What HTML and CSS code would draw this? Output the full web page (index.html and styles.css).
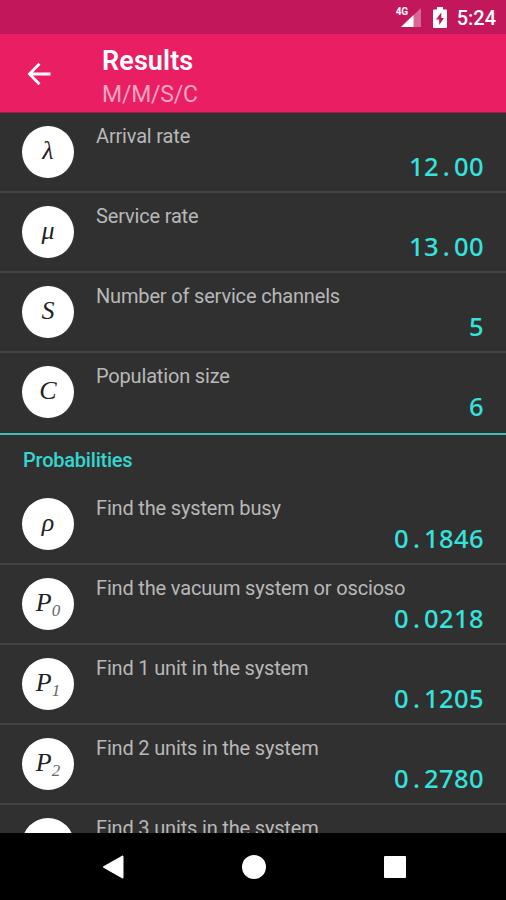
FILE: index.html
```html
<!DOCTYPE html>
<html lang="en">
<head>
    <meta charset="UTF-8">
    <meta name="viewport" content="width=device-width, initial-scale=1.0">
    <title>Results</title>
    <link rel="stylesheet" href="styles.css">
</head>
<body>
    <!-- Status bar -->
    <div class="status-bar">
        <div class="signal">
            <span class="network">4G</span>
            <svg width="20" height="19" viewBox="0 0 20 19">
                <path d="M20 0V19H0z" fill="#fff" fill-opacity="0.35"/>
                <path d="M12.5 7.1V19H0z" fill="#fff"/>
            </svg>
        </div>
        <svg class="battery" width="14" height="21" viewBox="0 0 14 21">
            <path d="M4 0h6v2.5h3q1 0 1 1V20q0 1-1 1H1q-1 0-1-1V3.500q0-1 1-1h3z" fill="#fff"/>
            <path d="M8.300 5.500L3 12.500h3.200v5.500L11 11H8.300z" fill="#c2185b"/>
        </svg>
        <span class="time">5:24</span>
    </div>

    <!-- Toolbar -->
    <header class="toolbar">
        <svg class="back" width="24" height="24" viewBox="0 0 24 24">
            <path d="M23.500 12H3M12.500 1.800L2.500 12l10 10.200" fill="none" stroke="#fff" stroke-width="2.800"/>
        </svg>
        <div>
            <h1>Results</h1>
            <p class="subtitle">M/M/S/C</p>
        </div>
    </header>

    <!-- Results list -->
    <main class="content">
        <ul class="list">
            <li class="row">
                <span class="symbol">λ</span>
                <div class="info">
                    <p class="label">Arrival rate</p>
                    <p class="value">12<span class="dot">.</span>00</p>
                </div>
            </li>
            <li class="row">
                <span class="symbol">μ</span>
                <div class="info">
                    <p class="label">Service rate</p>
                    <p class="value">13<span class="dot">.</span>00</p>
                </div>
            </li>
            <li class="row">
                <span class="symbol">S</span>
                <div class="info">
                    <p class="label">Number of service channels</p>
                    <p class="value">5</p>
                </div>
            </li>
            <li class="row">
                <span class="symbol">C</span>
                <div class="info">
                    <p class="label">Population size</p>
                    <p class="value">6</p>
                </div>
            </li>
        </ul>

        <h2>Probabilities</h2>
        <ul class="list">
            <li class="row">
                <span class="symbol">ρ</span>
                <div class="info">
                    <p class="label">Find the system busy</p>
                    <p class="value">0<span class="dot">.</span>1846</p>
                </div>
            </li>
            <li class="row">
                <span class="symbol">P<sub>0</sub></span>
                <div class="info">
                    <p class="label">Find the vacuum system or oscioso</p>
                    <p class="value">0<span class="dot">.</span>0218</p>
                </div>
            </li>
            <li class="row">
                <span class="symbol">P<sub>1</sub></span>
                <div class="info">
                    <p class="label">Find 1 unit in the system</p>
                    <p class="value">0<span class="dot">.</span>1205</p>
                </div>
            </li>
            <li class="row">
                <span class="symbol">P<sub>2</sub></span>
                <div class="info">
                    <p class="label">Find 2 units in the system</p>
                    <p class="value">0<span class="dot">.</span>2780</p>
                </div>
            </li>
            <li class="row">
                <span class="symbol">P<sub>3</sub></span>
                <div class="info">
                    <p class="label">Find 3 units in the system</p>
                </div>
            </li>
        </ul>
    </main>

    <!-- Navigation bar -->
    <nav class="nav-bar">
        <svg width="24" height="26" viewBox="0 0 24 26">
            <path d="M22.500 2.500V23.500L4 13z" fill="#fff" stroke="#fff" stroke-width="2" stroke-linejoin="round"/>
        </svg>
        <svg width="24" height="24" viewBox="0 0 24 24">
            <circle cx="12" cy="12" r="12" fill="#fff"/>
        </svg>
        <svg width="22" height="22" viewBox="0 0 22 22">
            <rect width="22" height="22" rx="1" fill="#fff"/>
        </svg>
    </nav>
</body>
</html>
```
FILE: styles.css
```css
* {
    margin: 0;
    padding: 0;
    box-sizing: border-box;
}

body {
    display: flex;
    flex-direction: column;
    height: 100vh;
    overflow: hidden;
    background: #303030;
    color: #fff;
    font-family: Roboto, sans-serif;
}

/* Status bar */
.status-bar {
    display: flex;
    flex: none;
    justify-content: flex-end;
    height: 34px;
    padding: 8px 10px 0 0;
    background: #c2185b;
}

.signal {
    position: relative;
    height: 19px;
    margin-right: 12px;
}

.network {
    position: absolute;
    top: -1px;
    left: -5px;
    font-size: 10px;
    font-weight: 700;
    line-height: 10px;
}

.battery {
    margin-top: -1px;
    margin-right: 10px;
}

.time {
    font-size: 20px;
    font-weight: 500;
    line-height: 20px;
}

/* Toolbar */
.toolbar {
    display: flex;
    flex: none;
    height: 79px;
    padding-top: 11px;
    padding-left: 27px;
    background: #e91e63;
    border-bottom: 1px solid #a01c48;
}

.back {
    margin-top: 17px;
    margin-right: 51px;
}

h1 {
    font-size: 27px;
    font-weight: 600;
    line-height: 32px;
    letter-spacing: 0.1px;
}

.subtitle {
    font-size: 23px;
    line-height: 35px;
    letter-spacing: -0.2px;
    color: #f8a5c1;
}

/* Results list */
.content {
    flex: 1;
    min-height: 0;
    overflow: hidden;
}

.list {
    list-style: none;
}

.row {
    display: flex;
    height: 80px;
    padding: 13px 22px 0;
    border-bottom: 2px solid #434343;
}

.row:last-child {
    border-bottom: none;
}

.symbol {
    display: flex;
    flex: none;
    align-items: center;
    justify-content: center;
    width: 52px;
    height: 52px;
    margin-right: 22px;
    padding-bottom: 2px;
    border-radius: 50%;
    background: #fff;
    color: #222;
    font-family: "Liberation Serif", serif;
    font-size: 26px;
    font-style: italic;
}

.symbol sub {
    margin-top: 16px;
    font-size: 17px;
    color: #666;
}

.info {
    flex: 1;
    margin-top: -1px;
}

.label {
    font-size: 20px;
    line-height: 22px;
    letter-spacing: -0.17px;
    color: #b8b8b8;
}

.value {
    font-family: "Noto Sans", sans-serif;
    font-size: 25.500px;
    font-weight: 500;
    line-height: 38px;
    letter-spacing: 0.4px;
    text-align: right;
    color: #35e3dd;
}

/* Keeps the decimal point as wide as a digit */
.dot {
    display: inline-block;
    width: 15px;
    text-align: center;
}

h2 {
    height: 52px;
    padding-left: 23px;
    border-top: 2px solid #45bdb9;
    font-size: 20px;
    font-weight: 500;
    line-height: 51px;
    letter-spacing: -0.22px;
    color: #35d6d0;
}

/* Navigation bar */
.nav-bar {
    display: flex;
    flex: none;
    align-items: center;
    justify-content: center;
    gap: 118px;
    height: 67px;
    padding-right: 1px;
    background: #000;
}
```
